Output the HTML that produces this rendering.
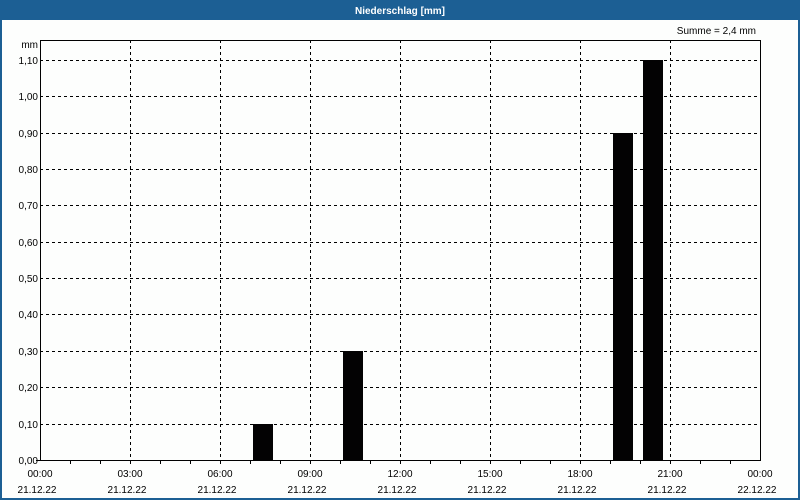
<!DOCTYPE html>
<html><head><meta charset="utf-8"><style>
body{margin:0;width:800px;height:500px;overflow:hidden;background:#fff}
svg{display:block}
text{font-family:"Liberation Sans","DejaVu Sans",sans-serif;font-size:10px;fill:#000}
</style></head><body>
<svg width="800" height="500" viewBox="0 0 800 500">
<rect x="0" y="0" width="800" height="500" fill="#1c5f94"/>
<rect x="2" y="20" width="796" height="478" fill="#fdfefd"/>
<text x="400" y="14" text-anchor="middle" fill="#fff" style="fill:#fff;font-weight:bold">Niederschlag [mm]</text>
<text x="756" y="34" text-anchor="end">Summe = 2,4 mm</text>
<g stroke="#000" stroke-width="1" stroke-dasharray="3,3">
<line x1="40" y1="60.5" x2="760" y2="60.5"/>
<line x1="40" y1="96.5" x2="760" y2="96.5"/>
<line x1="40" y1="133.5" x2="760" y2="133.5"/>
<line x1="40" y1="169.5" x2="760" y2="169.5"/>
<line x1="40" y1="205.5" x2="760" y2="205.5"/>
<line x1="40" y1="242.5" x2="760" y2="242.5"/>
<line x1="40" y1="278.5" x2="760" y2="278.5"/>
<line x1="40" y1="314.5" x2="760" y2="314.5"/>
<line x1="40" y1="351.5" x2="760" y2="351.5"/>
<line x1="40" y1="387.5" x2="760" y2="387.5"/>
<line x1="40" y1="424.5" x2="760" y2="424.5"/>
<line x1="130.5" y1="40" x2="130.5" y2="460"/>
<line x1="220.5" y1="40" x2="220.5" y2="460"/>
<line x1="310.5" y1="40" x2="310.5" y2="460"/>
<line x1="400.5" y1="40" x2="400.5" y2="460"/>
<line x1="490.5" y1="40" x2="490.5" y2="460"/>
<line x1="580.5" y1="40" x2="580.5" y2="460"/>
<line x1="670.5" y1="40" x2="670.5" y2="460"/>
</g>
<g fill="#030203">
<rect x="253" y="424" width="20" height="36"/>
<rect x="343" y="351" width="20" height="109"/>
<rect x="613" y="133" width="20" height="327"/>
<rect x="643" y="60" width="20" height="400"/>
</g>
<rect x="40.5" y="40.5" width="720" height="420" fill="none" stroke="#000"/>
<g stroke="#000">
<line x1="70.5" y1="460" x2="70.5" y2="464"/><line x1="100.5" y1="460" x2="100.5" y2="464"/><line x1="130.5" y1="460" x2="130.5" y2="464"/>
<line x1="160.5" y1="460" x2="160.5" y2="464"/><line x1="190.5" y1="460" x2="190.5" y2="464"/><line x1="220.5" y1="460" x2="220.5" y2="464"/>
<line x1="250.5" y1="460" x2="250.5" y2="464"/><line x1="280.5" y1="460" x2="280.5" y2="464"/><line x1="310.5" y1="460" x2="310.5" y2="464"/>
<line x1="340.5" y1="460" x2="340.5" y2="464"/><line x1="370.5" y1="460" x2="370.5" y2="464"/><line x1="400.5" y1="460" x2="400.5" y2="464"/>
<line x1="430.5" y1="460" x2="430.5" y2="464"/><line x1="460.5" y1="460" x2="460.5" y2="464"/><line x1="490.5" y1="460" x2="490.5" y2="464"/>
<line x1="520.5" y1="460" x2="520.5" y2="464"/><line x1="550.5" y1="460" x2="550.5" y2="464"/><line x1="580.5" y1="460" x2="580.5" y2="464"/>
<line x1="610.5" y1="460" x2="610.5" y2="464"/><line x1="640.5" y1="460" x2="640.5" y2="464"/><line x1="670.5" y1="460" x2="670.5" y2="464"/>
<line x1="700.5" y1="460" x2="700.5" y2="464"/><line x1="730.5" y1="460" x2="730.5" y2="464"/>
<line x1="36" y1="460.5" x2="40" y2="460.5"/>
</g>
<g text-anchor="end">
<text x="38" y="48">mm</text>
<text x="38" y="64">1,10</text><text x="38" y="100">1,00</text><text x="38" y="137">0,90</text>
<text x="38" y="173">0,80</text><text x="38" y="209">0,70</text><text x="38" y="246">0,60</text>
<text x="38" y="282">0,50</text><text x="38" y="318">0,40</text><text x="38" y="355">0,30</text>
<text x="38" y="391">0,20</text><text x="38" y="428">0,10</text><text x="38" y="464">0,00</text>
</g>
<g text-anchor="middle">
<text x="40" y="477">00:00</text><text x="130" y="477">03:00</text><text x="220" y="477">06:00</text>
<text x="310" y="477">09:00</text><text x="400" y="477">12:00</text><text x="490" y="477">15:00</text>
<text x="580" y="477">18:00</text><text x="670" y="477">21:00</text><text x="760" y="477">00:00</text>
<text x="37" y="493">21.12.22</text><text x="127" y="493">21.12.22</text><text x="217" y="493">21.12.22</text>
<text x="307" y="493">21.12.22</text><text x="397" y="493">21.12.22</text><text x="487" y="493">21.12.22</text>
<text x="577" y="493">21.12.22</text><text x="667" y="493">21.12.22</text><text x="757" y="493">22.12.22</text>
</g>
</svg>
</body></html>
